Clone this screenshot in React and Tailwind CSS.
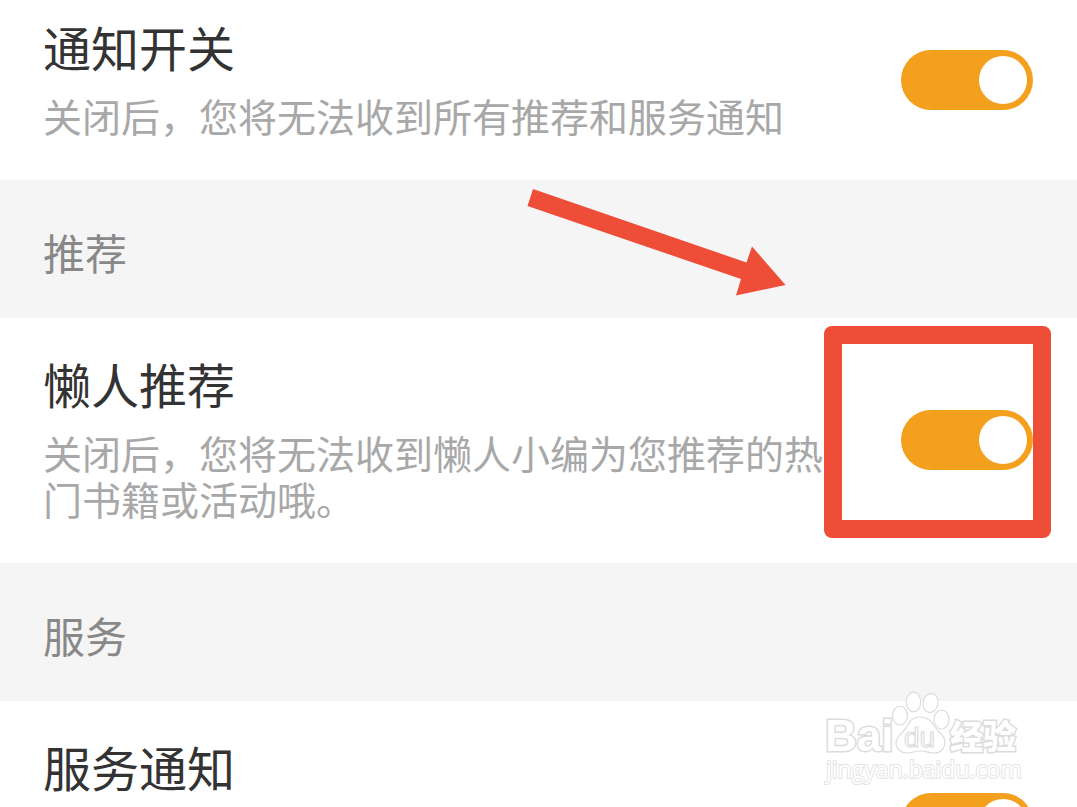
function Toggle({ id }) {
  return (
    <input
      id={id}
      type="checkbox"
      role="switch"
      defaultChecked
      className="flex h-[60px] w-[132px] shrink-0 cursor-pointer appearance-none items-center justify-start rounded-full bg-gray-300 px-1.5 before:size-12 before:rounded-full before:bg-white before:content-[''] checked:justify-end checked:bg-[#f2a01e]"
    />
  );
}

function SettingRow({ id, title, description, highlighted = false }) {
  return (
    <div className="flex items-center gap-[60px] bg-white pr-11 pl-[43px]">
      <div className="min-w-0 flex-1 pt-[34px] pb-[42px]">
        <label htmlFor={id} className="block text-[48px] leading-[62px] text-[#333333]">
          {title}
        </label>
        <p className="mt-[15px] text-[39px] leading-[46px] text-[#a8a8a8]">{description}</p>
      </div>
      <div className="relative mb-0.5 shrink-0">
        <Toggle id={id} />
        {highlighted && (
          <div className="pointer-events-none absolute -top-[84px] -right-[18px] -bottom-[68px] -left-[77px] rounded-lg border-[18px] border-[#ee4d38]" />
        )}
      </div>
    </div>
  );
}

function SectionHeader({ title, children }) {
  return (
    <div className="relative bg-[#f5f5f5] pt-[41px] pr-11 pb-[35px] pl-[43px]">
      <h2 className="text-[42px] leading-[62px] text-[#888888]">{title}</h2>
      {children}
    </div>
  );
}

function Arrow() {
  return (
    <svg
      className="pointer-events-none absolute top-2 left-[527px]"
      width="260"
      height="110"
      viewBox="527 188 260 110"
      aria-hidden="true"
    >
      <path d="M533 189 L746.500 262.500 L752 246.500 L785.500 285 L736 295.500 L741 279 L527.500 206 Z" fill="#ee4d38" />
    </svg>
  );
}

function Watermark() {
  return (
    <svg
      className="pointer-events-none absolute right-[53px] bottom-[17px]"
      width="200"
      height="100"
      viewBox="824 690 200 100"
      fill="#ffffff"
      stroke="#dcdcdc"
      strokeWidth="1.2"
    >
      <g fontFamily="'Liberation Sans', Arial, sans-serif" fontWeight="700" strokeWidth="3" paintOrder="stroke">
        <text x="825" y="751" fontSize="44">Bai</text>
      </g>
      <ellipse cx="900" cy="715.500" rx="7.500" ry="9.500" />
      <ellipse cx="913.500" cy="702" rx="7.200" ry="9.800" />
      <ellipse cx="930.500" cy="703" rx="7.500" ry="9.500" transform="rotate(10 930.500 703)" />
      <ellipse cx="941.500" cy="719.500" rx="7.500" ry="9.500" />
      <path d="M920 717 C912 717 909 722 906 728 C903 733 896 736 896 743 C896 749 901 753 907 753 C912 753 915 751 920 751 C926 751 930 753 935 753 C941 753 945 748 945 742 C945 735 939 733 935 727 C931 721 928 717 920 717 Z" />
      <text x="904" y="747" fontSize="28" fontFamily="'Liberation Sans', Arial, sans-serif" strokeWidth="1.2">du</text>
      <g fontFamily="'Noto Sans CJK SC', sans-serif" fontWeight="900" strokeWidth="3" paintOrder="stroke">
        <text x="950" y="749" fontSize="33">经验</text>
      </g>
      <g fontFamily="'Open Sans', sans-serif" stroke="#e4e4e4" strokeWidth="2" paintOrder="stroke">
        <text x="826" y="778" fontSize="23">jingyan.baidu.com</text>
      </g>
    </svg>
  );
}

export default function App() {
  return (
    <div className="relative flex h-screen flex-col overflow-hidden bg-white font-['Noto_Sans_CJK_SC',sans-serif]">
      <main className="-mt-[19px]">
        <SettingRow id="all" title="通知开关" description="关闭后，您将无法收到所有推荐和服务通知" />
        <SectionHeader title="推荐">
          <Arrow />
        </SectionHeader>
        <SettingRow
          id="recommend"
          title="懒人推荐"
          description="关闭后，您将无法收到懒人小编为您推荐的热门书籍或活动哦。"
          highlighted
        />
        <SectionHeader title="服务" />
        <div className="flex min-h-[245px] items-start justify-between pt-[34px] pr-11 pl-[43px]">
          <label htmlFor="service" className="text-[48px] leading-[62px] text-[#333333]">
            服务通知
          </label>
          <div className="pt-[58px]">
            <Toggle id="service" />
          </div>
        </div>
      </main>
      <Watermark />
    </div>
  );
}
